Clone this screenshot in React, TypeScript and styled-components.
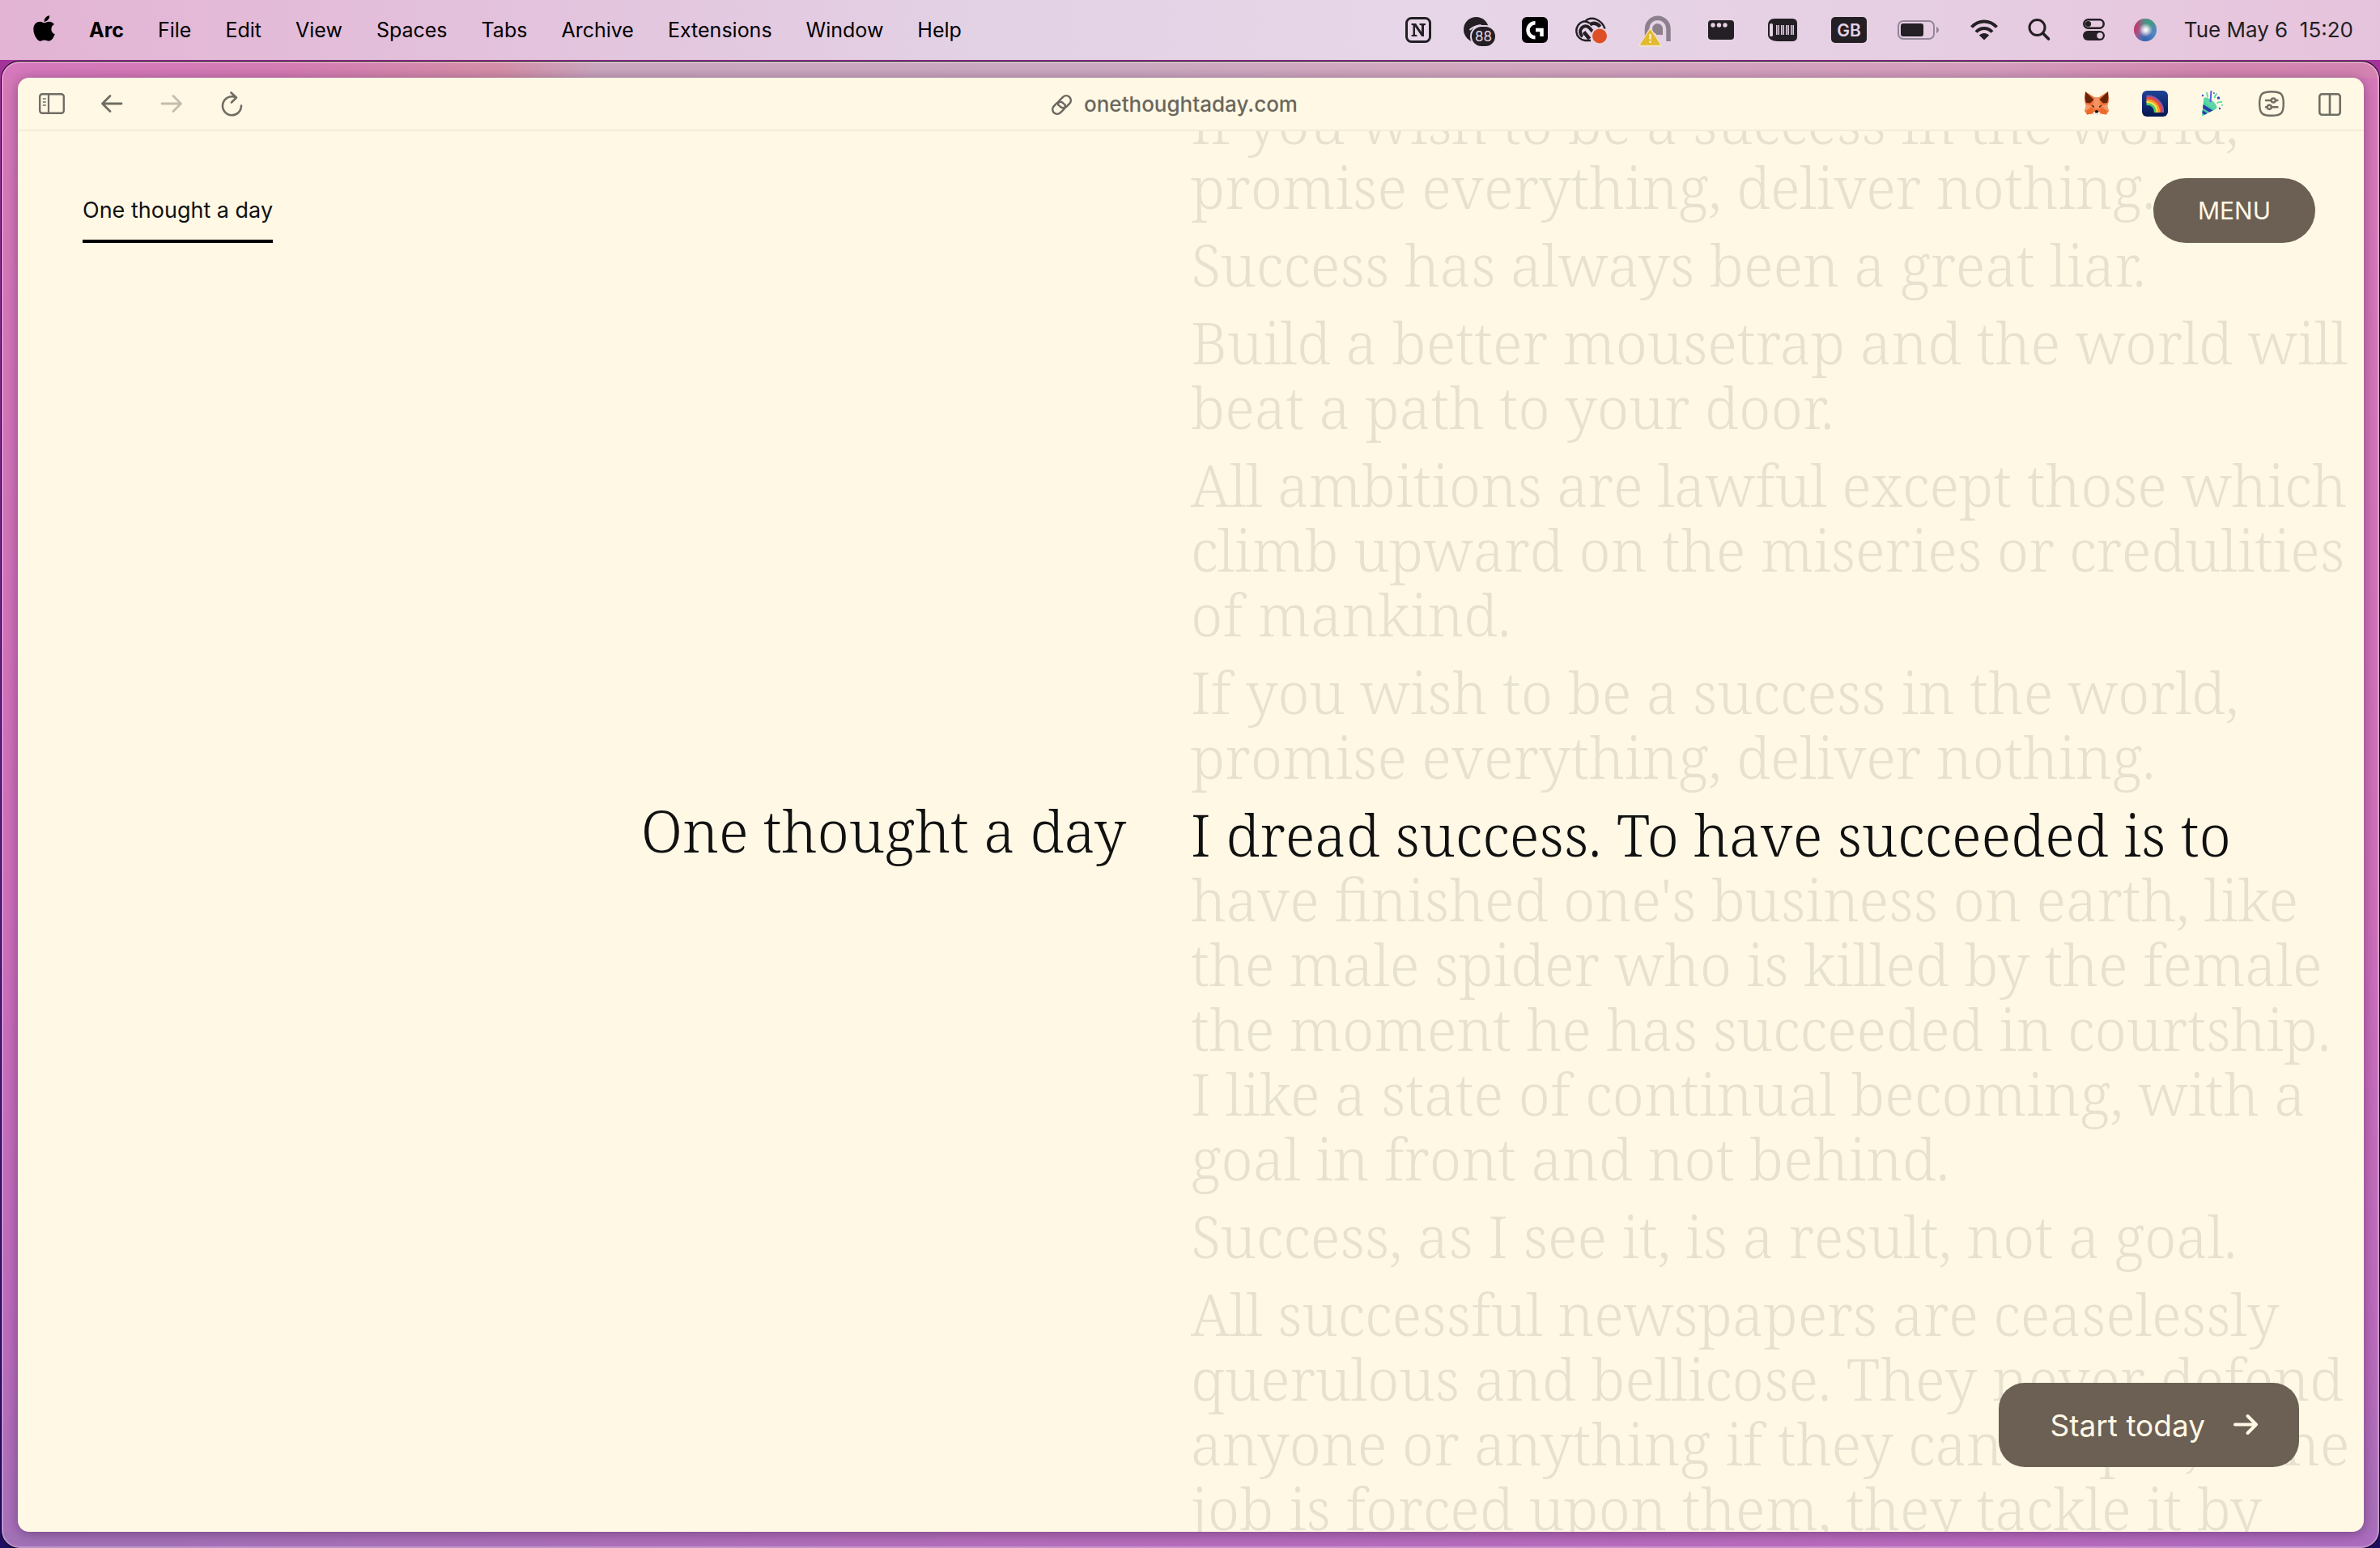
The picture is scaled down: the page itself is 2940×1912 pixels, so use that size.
import React from 'react';
import styled, { createGlobalStyle } from 'styled-components';
import { FaApple } from 'react-icons/fa';

const cream = '#fff8e5';
const bark = '#6c5f53';
const ink = '#111111';
const chrome = '#706d63';
const glyph = '#231f24';
const sans = '"Inter", "Liberation Sans", sans-serif';
const serif = '"Noto Serif", "Liberation Serif", serif';

const GlobalStyle = createGlobalStyle`
  *, *::before, *::after { box-sizing: border-box; }
  body { margin: 0; font-family: ${sans}; }
  button { margin: 0; padding: 0; border: 0; background: none; color: inherit; font: inherit; cursor: pointer; }
  a { color: inherit; text-decoration: none; }
  svg { display: block; flex: none; }
`;

const Desktop = styled.div`
  display: flex;
  flex-direction: column;
  height: 100vh;
  overflow: hidden;
  background: linear-gradient(180deg, #a8359b 0%, #5c2288 50%, #210d60 100%);
`;

/* ---------- system menu bar ---------- */

const MenuBar = styled.header`
  flex: none;
  display: flex;
  align-items: center;
  justify-content: space-between;
  height: 74px;
  padding: 0 33px 0 41px;
  background: linear-gradient(90deg, #e3b4d4 0%, #e3c1dc 20%, #e3d2e5 42%, #e7d6e8 60%, #e6cfe3 79%, #e6c3dc 100%);
`;

const MenuGroup = styled.nav`
  display: flex;
  align-items: center;
  gap: 42px;
  color: #000;
`;

const MenuItem = styled.button<{ $strong?: boolean }>`
  font-size: 25px;
  line-height: 32px;
  font-weight: ${(p) => (p.$strong ? 700 : 400)};
`;

const AppleLogo = styled(FaApple)`
  width: 27px;
  height: 36px;
  margin-bottom: 4px;
`;

const StatusGroup = styled.div`
  display: flex;
  align-items: center;
  gap: 32px;
  color: ${glyph};
`;

const Clock = styled.time`
  font-size: 26px;
  line-height: 32px;
  white-space: pre;
`;

/* ---------- browser window ---------- */

const BrowserFrame = styled.div`
  flex: 1;
  min-height: 0;
  display: flex;
  margin: 2px 1px 0 2px;
  padding: 20px 19px 20px 20px;
  border-radius: 22px;
  background:
    linear-gradient(90deg, #a272b8 0%, #b56fbc 40%, #bb6bbf 84%, #ac6dbf 100%) bottom / 100% 20px no-repeat,
    linear-gradient(90deg, #d678bd 0%, #d57db4 12%, #d590a8 21%, #cba7bf 25%, #cba9c0 45%, #d2a8bf 60%, #d59dbd 84%, #d487b0 93%, #d584b2 100%) top / 100% 20px no-repeat,
    linear-gradient(180deg, #d67ab9 0%, #cf70bb 55%, #bb6cbd 86%, #a771bb 100%);
  box-shadow: 0 0 0 1px #06000c, inset 0 0 0 2px rgba(255, 255, 255, 0.26);
`;

const BrowserPane = styled.div`
  flex: 1;
  min-width: 0;
  display: flex;
  flex-direction: column;
  overflow: hidden;
  border-radius: 14px;
  background: ${cream};
  box-shadow: 0 2px 16px rgba(40, 10, 50, 0.42);
`;

const Toolbar = styled.div`
  flex: none;
  display: flex;
  align-items: center;
  height: 66px;
  padding: 0 26px;
  border-bottom: 2px solid #f3ecda;
  color: ${chrome};
`;

const ToolGroup = styled.div<{ $gap: number }>`
  display: flex;
  align-items: center;
  gap: ${(p) => p.$gap}px;
`;

const ToolButton = styled.button<{ $dim?: boolean }>`
  width: 32px;
  height: 32px;
  opacity: ${(p) => (p.$dim ? 0.42 : 1)};
`;

const Address = styled.button`
  flex: 1;
  display: flex;
  align-items: center;
  justify-content: center;
  gap: 13px;
  padding: 2px 0 0 24px;
  color: #6a675e;
  font-size: 26px;
  font-weight: 500;
  line-height: 32px;
`;

/* ---------- web page ---------- */

const Page = styled.main`
  position: relative;
  flex: 1;
  min-height: 0;
  display: grid;
  grid-template-columns: 1fr 1fr;
  overflow: hidden;
  color: ${ink};
`;

const PageHeader = styled.header`
  position: absolute;
  z-index: 1;
  top: 58px;
  left: 80px;
  right: 60px;
  display: flex;
  align-items: flex-end;
  justify-content: space-between;
`;

const HomeLink = styled.a`
  padding-bottom: 16px;
  border-bottom: 4px solid #000;
  font-size: 27px;
  line-height: 40px;
`;

const MenuButton = styled.button`
  width: 200px;
  height: 80px;
  border-radius: 40px;
  background: ${bark};
  color: ${cream};
  font-size: 30px;
`;

const TitleSide = styled.section`
  display: flex;
  align-items: center;
  justify-content: flex-end;
  padding: 0 80px 2px 0;
`;

const Title = styled.h1`
  margin: 0;
  font-family: ${serif};
  font-size: 71px;
  font-weight: 300;
  line-height: 80px;
  white-space: nowrap;
`;

const QuoteSide = styled.section`
  min-width: 0;
  overflow: hidden;
`;

const QuoteList = styled.div`
  display: flex;
  flex-direction: column;
  gap: 16px;
  margin-top: -51px;
`;

const Quote = styled.p`
  margin: 0;
  font-family: ${serif};
  font-size: 71px;
  font-weight: 300;
  line-height: 80px;
`;

const Line = styled.span<{ $current: boolean }>`
  display: block;
  white-space: nowrap;
  color: ${(p) => (p.$current ? ink : '#e7e1d0')};
`;

const StartButton = styled.button`
  position: absolute;
  z-index: 1;
  right: 80px;
  bottom: 80px;
  display: flex;
  align-items: center;
  gap: 34px;
  height: 104px;
  padding: 0 50px 0 64px;
  border-radius: 32px;
  background: ${bark};
  color: ${cream};
  font-size: 37px;
`;

/* ---------- status icons: 44px tall, width is the slot in the bar ---------- */

const NotionIcon = () => (
  <svg width="32" height="44" viewBox="0 0 32 44">
    <rect x="1.5" y="7.5" width="29" height="29" rx="6" fill="none" stroke={glyph} strokeWidth="3" />
    <path d="M7.5 14h5.5l7 10.500v-8l-2.500-.7V14H25v1.800l-2 .7V30h-2.800l-8.200-12v9.700l2.600.7V30H7.500v-1.600l2-.7V16.300l-2-.6z" fill={glyph} />
  </svg>
);

const BadgeIcon = () => (
  <svg width="48" height="44" viewBox="0 0 48 44">
    <circle cx="23.500" cy="21.500" r="15.500" fill={glyph} />
    <path d="M15.500 22c4-3.500 9-5.500 14-6" fill="none" stroke="#e6d5e7" strokeWidth="2" />
    <rect x="17" y="17" width="31" height="26" rx="13" fill={glyph} stroke="#e6d5e7" strokeWidth="2" />
    <text x="32.500" y="36" textAnchor="middle" fontFamily="Inter, sans-serif" fontSize="17" fill="#e6d5e7">88</text>
  </svg>
);

const LogiIcon = () => (
  <svg width="32" height="44" viewBox="0 0 32 44">
    <rect y="6" width="32" height="32" rx="6" fill="#000" />
    <path d="M16.500 13.200a9 9 0 0 0 0 18M17 22h7.500v8" fill="none" stroke="#fff" strokeWidth="4.500" />
  </svg>
);

const CloudIcon = () => (
  <svg width="42" height="44" viewBox="0 0 42 44">
    <g fill="none" stroke={glyph}>
      <path d="M21 35H14A12 12 0 0 1 12 11.500c3-.3 5.500.5 7.500 2" strokeWidth="2.400" />
      <path d="M14 11.500C18 7.500 23 7 28 9c5 2.200 9 6 10.500 11.500" strokeWidth="2.400" />
      <path d="M11 30a7 7 0 0 1-1.500-10c3-3.800 7.500-3.400 10-.5l6 7" strokeWidth="4" />
      <path d="M19.500 33L12.500 24.500" strokeWidth="4.500" />
      <path d="M20 15.500c4-3 9.500-2 12.500 2.500" strokeWidth="4.500" />
    </g>
    <circle cx="31.500" cy="29.500" r="10.500" fill="#e6d5e7" />
    <circle cx="32" cy="29.500" r="9" fill="#dd5026" />
  </svg>
);

const LockWarningIcon = () => (
  <svg width="52" height="44" viewBox="0 0 52 44">
    <path d="M16.500 30V20.500a13.200 13.200 0 0 1 26.500 0V36" fill="none" stroke="#8d808d" strokeWidth="5.500" />
    <circle cx="29.500" cy="20.500" r="6.500" fill="#8d808d" />
    <path d="M28 20h8v8h-8z" fill="#8d808d" />
    <path d="M20.500 22L33 41H8z" fill="#efe4c9" stroke="#efe4c9" strokeWidth="3.500" strokeLinejoin="round" />
    <path d="M20.500 22.500L32 40H9z" fill="#e3b92f" stroke="#e3b92f" strokeWidth="1.500" strokeLinejoin="round" />
    <path d="M20.500 27v6.500M20.500 35.500v2.500" stroke="#f6ecc6" strokeWidth="2.600" />
  </svg>
);

const WindowDotsIcon = () => (
  <svg width="48" height="44" viewBox="0 0 48 44">
    <rect x="8" y="10" width="32" height="24" rx="4" fill={glyph} />
    {[14, 21.500, 29].map((x) => (
      <circle key={x} cx={x} cy="16" r="2.700" fill="#e6d2e5" />
    ))}
  </svg>
);

const BarcodeIcon = () => (
  <svg width="40" height="44" viewBox="0 0 40 44">
    <path d="M10 8h21c5 0 7 2 7 6v16c0 4-2 6-7 6H14C6 36 2 32 2 28V16c0-5 3-8 8-8z" fill={glyph} />
    <rect x="4" y="14" width="4" height="16" rx="1.500" fill="#e6d2e5" />
    {[12, 18, 24, 30].map((x) => (
      <path key={x} d={`M${x + 0.8} 16v12M${x + 3.200} 16v12`} stroke="#e6d2e5" strokeWidth="1.500" />
    ))}
  </svg>
);

const InputSourceIcon = () => (
  <svg width="56" height="44" viewBox="0 0 56 44">
    <rect x="8" y="6" width="44" height="32" rx="5" fill={glyph} />
    <text x="30" y="29.500" textAnchor="middle" fontFamily="Inter, sans-serif" fontWeight="600" fontSize="21" fill="#e6d0e4">GB</text>
  </svg>
);

const BatteryIcon = () => (
  <svg width="60" height="44" viewBox="0 0 60 44">
    <rect x="3" y="11" width="44" height="22" rx="6" fill="none" stroke="#94879a" strokeWidth="2" />
    <rect x="6" y="14" width="28" height="16" rx="3" fill={glyph} />
    <path d="M50 18c4 1.500 4 6.500 0 8z" fill="#94879a" />
  </svg>
);

const WifiIcon = () => (
  <svg width="34" height="44" viewBox="0 0 34 44">
    <g fill="none" stroke={glyph} strokeWidth="4">
      <path d="M1.500 18.500c8.500-9.500 22.500-9.500 31 0" />
      <path d="M7 24.500c5.500-6 14.500-6 20 0" />
    </g>
    <path d="M10.800 28.500c3.500-3.500 8.900-3.500 12.400 0L17 34.500z" fill={glyph} />
  </svg>
);

const SearchIcon = () => (
  <svg width="38" height="44" viewBox="0 0 38 44">
    <circle cx="16.500" cy="19" r="9.500" fill="none" stroke={glyph} strokeWidth="3" />
    <path d="M23.500 26l7 7" stroke={glyph} strokeWidth="3.600" strokeLinecap="round" />
  </svg>
);

const ControlCenterIcon = () => (
  <svg width="32" height="44" viewBox="0 0 32 44">
    <rect x="4.300" y="9.300" width="24.400" height="10.400" rx="5.200" fill="none" stroke={glyph} strokeWidth="2.600" />
    <circle cx="9.500" cy="14.500" r="3.600" fill={glyph} />
    <rect x="3" y="23" width="27" height="12" rx="6" fill={glyph} />
    <circle cx="24" cy="29" r="3.700" fill="#e6c9e0" />
  </svg>
);

const SiriIcon = () => (
  <svg width="32" height="44" viewBox="0 0 32 44">
    <defs>
      <linearGradient id="siriBase" x1="0" y1="0.300" x2="1" y2="0.700">
        <stop offset="0" stopColor="#c8305f" />
        <stop offset="0.450" stopColor="#8d6aa6" />
        <stop offset="1" stopColor="#3f8fd0" />
      </linearGradient>
      <radialGradient id="siriGreen" cx="0.650" cy="0.120" r="0.550">
        <stop offset="0" stopColor="#35a07c" />
        <stop offset="1" stopColor="#35a07c" stopOpacity="0" />
      </radialGradient>
      <radialGradient id="siriBlue" cx="0.500" cy="0.950" r="0.450">
        <stop offset="0" stopColor="#2a66b0" />
        <stop offset="1" stopColor="#2a66b0" stopOpacity="0" />
      </radialGradient>
      <radialGradient id="siriGlow" cx="0.520" cy="0.500" r="0.300">
        <stop offset="0" stopColor="#fff" />
        <stop offset="0.300" stopColor="#fff" stopOpacity="0.800" />
        <stop offset="1" stopColor="#fff" stopOpacity="0" />
      </radialGradient>
    </defs>
    {['siriBase', 'siriGreen', 'siriBlue', 'siriGlow'].map((id) => (
      <circle key={id} cx="16" cy="22" r="14" fill={`url(#${id})`} />
    ))}
  </svg>
);

/* ---------- toolbar icons: 32px square ---------- */

const SidebarIcon = () => (
  <svg width="32" height="32" viewBox="0 0 32 32" fill="none" stroke="currentColor">
    <rect x="1.200" y="4.200" width="29.600" height="23.600" rx="3" strokeWidth="2.400" />
    <path d="M12 4v24" strokeWidth="2.200" />
    <path d="M4.800 10h4M4.800 14h4M4.800 18h4" strokeWidth="1.600" />
  </svg>
);

const BackIcon = () => (
  <svg width="32" height="32" viewBox="0 0 32 32" fill="none" stroke="currentColor" strokeWidth="2.800" strokeLinecap="round" strokeLinejoin="round">
    <path d="M28 16H4.500M14 6.500L4.500 16l9.500 9.500" />
  </svg>
);

const ForwardIcon = () => (
  <svg width="32" height="32" viewBox="0 0 32 32" fill="none" stroke="currentColor" strokeWidth="2.800" strokeLinecap="round" strokeLinejoin="round">
    <path d="M4 16h23.500M18 6.500l9.500 9.500-9.500 9.500" />
  </svg>
);

const ReloadIcon = () => (
  <svg width="32" height="32" viewBox="0 0 32 32" fill="none" stroke="currentColor" strokeWidth="2.600" strokeLinecap="round" strokeLinejoin="round">
    <path d="M28 18.500A11.500 11.500 0 1 1 21 8.200M15.500 2.500l6.500 6-6 6" />
  </svg>
);

const LinkIcon = () => (
  <svg width="29" height="29" viewBox="0 0 24 24" fill="none" stroke="currentColor" strokeWidth="2" strokeLinecap="round" strokeLinejoin="round">
    <path d="M10 13.200a4.600 4.600 0 0 0 7 .5l3-3a4.700 4.700 0 0 0-6.700-6.700l-3.600 3.600a4.600 4.600 0 0 0-1 4.800" />
    <path d="M14 10.800a4.600 4.600 0 0 0-7-.5l-3 3A4.700 4.700 0 0 0 10.700 20l3.600-3.600a4.600 4.600 0 0 0 1-4.800" />
  </svg>
);

const FoxIcon = () => (
  <svg width="32" height="32" viewBox="0 0 32 32">
    <path d="M2 1l11 7h6l11-7 1 12-2 6 2 6-3 4.500-7-1.500-5 2.500-5-2.500-7 1.500L1 25l2-6-2-6z" fill="#f0763c" />
    <path d="M2 1.200L12.500 11 8 15.500 3 15 1.400 9zM30 1.200L19.500 11l4.500 4.500 5-.5 1.600-6z" fill="#6a2408" />
    <path d="M13 8h6l1.500 14h-9z" fill="#f79262" />
    <path d="M3 17l7 2-6 5-3 1zM29 17l-7 2 6 5 3 1z" fill="#f59a68" />
    <path d="M4 24l7-2 2 6-9 1.500zM28 24l-7-2-2 6 9 1.500z" fill="#ee6a2c" />
    <path d="M9 17.500l4 1.500-.5 2.300zM23 17.500L19 19l.5 2.300z" fill="#3a2418" />
    <path d="M11.500 27l2.500-1.500h4l2.500 1.500-1 3.500h-7z" fill="#f4eee6" />
    <path d="M13.500 25l2.500-1 2.500 1-1 2.500h-3z" fill="#20140f" />
  </svg>
);

const RainbowIcon = () => (
  <svg width="32" height="32" viewBox="0 0 32 32">
    <defs>
      <linearGradient id="rainbowSky" x1="0" y1="0" x2="0" y2="1">
        <stop offset="0" stopColor="#1d4497" />
        <stop offset="1" stopColor="#06164f" />
      </linearGradient>
    </defs>
    <rect width="32" height="32" rx="6" fill="url(#rainbowSky)" />
    <g fill="none" strokeWidth="2.700">
      <path d="M5.500 7A19 19 0 0 1 25.800 27" stroke="#8d57a5" />
      <path d="M5.500 9.300A16.500 16.500 0 0 1 23.400 27" stroke="#ef4a3a" />
      <path d="M5.500 11.900A14 14 0 0 1 20.900 27" stroke="#fb9a2c" />
      <path d="M5.500 14.400A11.500 11.500 0 0 1 18.400 27" stroke="#fbe54b" />
      <path d="M5.500 16.800A9 9 0 0 1 16 27" stroke="#47c96b" />
    </g>
  </svg>
);

const PartyIcon = () => (
  <svg width="32" height="32" viewBox="0 0 32 32">
    <path d="M2 31.500L4.500 9.500C9 11 17 17 19.500 22.500z" fill="#3fd29b" />
    <path d="M3.600 17l12 7.500-4.400 2.100-8.200-5.200zM2.700 24l5.900 3.900-3 1.800-3.200-2z" fill="#3138a8" />
    <ellipse cx="12.500" cy="15.500" rx="10" ry="4" transform="rotate(40 12.500 15.500)" fill="#5fd6a8" />
    <path d="M13.500 0l-1 14" stroke="#5a5fd8" strokeWidth="2" />
    <path d="M8 2l1.200 6M17.500 9c.5-2.500 1-3.500 3-5.500M20.500 15.500c2-1.500 4-2 6.500-1.500" fill="none" stroke="#4fe0a6" strokeWidth="1.800" />
    <g fill="#3d44c4">
      <circle cx="22.500" cy="9" r="1.800" />
      <circle cx="3" cy="6" r="1.200" />
      <circle cx="24" cy="22" r="1.200" />
      <circle cx="17" cy="3" r="0.900" />
    </g>
    <circle cx="27" cy="18" r="1.100" fill="#4fe0a6" />
  </svg>
);

const TuneIcon = () => (
  <svg width="32" height="32" viewBox="0 0 32 32" fill="none" stroke="currentColor" strokeWidth="2.400">
    <path d="M16 1.200c12 0 14.800 2.800 14.800 14.800S28 30.800 16 30.800 1.200 28 1.200 16 4 1.200 16 1.200z" />
    <g strokeLinecap="round">
      <path d="M9 12h6.500M21 12h2.500M9 20.300h1.500M16 20.300h7.500" />
      <circle cx="18.300" cy="12" r="2.500" />
      <circle cx="13.300" cy="20.300" r="2.500" />
    </g>
  </svg>
);

const SplitIcon = () => (
  <svg width="32" height="32" viewBox="0 0 32 32" fill="none" stroke="currentColor" strokeWidth="2.600">
    <rect x="3.300" y="4.300" width="25.400" height="25.400" rx="3" />
    <path d="M16 4v26" />
  </svg>
);

const ArrowIcon = () => (
  <svg width="32" height="32" viewBox="0 0 32 32" fill="none" stroke="currentColor" strokeWidth="4" strokeLinecap="round" strokeLinejoin="round">
    <path d="M3 15.500h26M18.500 5L29 15.500 18.500 26" />
  </svg>
);

/* ---------- content ---------- */

const menus = ['File', 'Edit', 'View', 'Spaces', 'Tabs', 'Archive', 'Extensions', 'Window', 'Help'];

const statusItems: [string, React.FC][] = [
  ['Notion', NotionIcon],
  ['Messages', BadgeIcon],
  ['G Hub', LogiIcon],
  ['Creative Cloud', CloudIcon],
  ['VPN', LockWarningIcon],
  ['Window manager', WindowDotsIcon],
  ['Touch bar', BarcodeIcon],
  ['Input source', InputSourceIcon],
  ['Battery', BatteryIcon],
  ['Wi-Fi', WifiIcon],
  ['Search', SearchIcon],
  ['Control Centre', ControlCenterIcon],
  ['Siri', SiriIcon],
];

const extensions: [string, React.FC][] = [
  ['Wallet', FoxIcon],
  ['Rainbow', RainbowIcon],
  ['Party', PartyIcon],
  ['Site settings', TuneIcon],
  ['Split view', SplitIcon],
];

const quotes: string[][] = [
  ['If you wish to be a success in the world,', 'promise everything, deliver nothing.'],
  ['Success has always been a great liar.'],
  ['Build a better mousetrap and the world will', 'beat a path to your door.'],
  ['All ambitions are lawful except those which', 'climb upward on the miseries or credulities', 'of mankind.'],
  ['If you wish to be a success in the world,', 'promise everything, deliver nothing.'],
  [
    'I dread success. To have succeeded is to',
    "have finished one's business on earth, like",
    'the male spider who is killed by the female',
    'the moment he has succeeded in courtship.',
    'I like a state of continual becoming, with a',
    'goal in front and not behind.',
  ],
  ['Success, as I see it, is a result, not a goal.'],
  [
    'All successful newspapers are ceaselessly',
    'querulous and bellicose. They never defend',
    'anyone or anything if they can help it; if the',
    'job is forced upon them, they tackle it by',
  ],
];

const current = { quote: 5, line: 0 };

export default function App() {
  return (
    <Desktop>
      <GlobalStyle />
      <MenuBar>
        <MenuGroup aria-label="Application menu">
          <MenuItem aria-label="Apple">
            <AppleLogo />
          </MenuItem>
          <MenuItem $strong>Arc</MenuItem>
          {menus.map((name) => (
            <MenuItem key={name}>{name}</MenuItem>
          ))}
        </MenuGroup>
        <StatusGroup>
          {statusItems.map(([name, Icon]) => (
            <button key={name} aria-label={name}>
              <Icon />
            </button>
          ))}
          <Clock>{'Tue May 6  15:20'}</Clock>
        </StatusGroup>
      </MenuBar>

      <BrowserFrame>
        <BrowserPane>
          <Toolbar>
            <ToolGroup $gap={42}>
              <ToolButton aria-label="Toggle sidebar"><SidebarIcon /></ToolButton>
              <ToolButton aria-label="Back"><BackIcon /></ToolButton>
              <ToolButton aria-label="Forward" $dim><ForwardIcon /></ToolButton>
              <ToolButton aria-label="Reload"><ReloadIcon /></ToolButton>
            </ToolGroup>
            <Address>
              <LinkIcon />
              onethoughtaday.com
            </Address>
            <ToolGroup $gap={40}>
              {extensions.map(([name, Icon]) => (
                <ToolButton key={name} aria-label={name}>
                  <Icon />
                </ToolButton>
              ))}
            </ToolGroup>
          </Toolbar>

          <Page>
            <PageHeader>
              <HomeLink href="#">One thought a day</HomeLink>
              <MenuButton>MENU</MenuButton>
            </PageHeader>
            <TitleSide>
              <Title>One thought a day</Title>
            </TitleSide>
            <QuoteSide>
              <QuoteList>
                {quotes.map((lines, q) => (
                  <Quote key={q}>
                    {lines.map((text, l) => (
                      <Line key={l} $current={q === current.quote && l === current.line}>
                        {text}
                      </Line>
                    ))}
                  </Quote>
                ))}
              </QuoteList>
            </QuoteSide>
            <StartButton>
              Start today
              <ArrowIcon />
            </StartButton>
          </Page>
        </BrowserPane>
      </BrowserFrame>
    </Desktop>
  );
}
